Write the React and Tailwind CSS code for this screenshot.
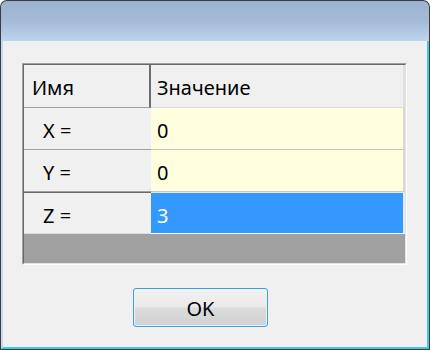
import React from "react";

const font = { fontFamily: '"Noto Sans", "Open Sans", sans-serif' };

function RowHeader({ label, current }) {
  return (
    <div
      className={
        current
          ? "w-[127px] h-[42px] flex items-center pl-[19px] pt-[5px] bg-[#f0f0f0] border-t border-t-[#6a6a6a] border-b border-b-[#dadada]"
          : "w-[127px] h-[42px] flex items-center pl-[19px] pt-[5px] bg-[#f0f0f0] border-b border-b-[#a0a0a0]"
      }
    >
      {label}
    </div>
  );
}

export default function App() {
  return (
    <div
      className="w-[430px] h-[350px] bg-[#3c3c3c] rounded-t-[7px] p-px flex flex-col text-[20px] text-black"
      style={font}
    >
      <div className="h-[40px] rounded-t-[6px] bg-gradient-to-b from-[#9bb3cf] via-[#a3bbd8] to-[#bed5ee]" />
      <div className="flex-1 flex flex-col bg-[#f0f0f0] border-l-2 border-l-[#c4d8ee] border-r-2 border-r-[#3cc6f2] border-b-2 border-b-[#3cc6f2]">
        <div className="ml-[19px] mt-[22px] w-[385px] h-[202px] border border-t-[#a0a0a0] border-l-[#a0a0a0] border-r-white border-b-white">
          <div className="w-full h-full flex flex-col border border-t-[#696969] border-l-[#696969] border-r-[#e3e3e3] border-b-[#e3e3e3]">
            <div className="flex h-[43px]">
              <div className="w-[127px] flex items-center pl-[8px] pt-[3px] bg-[#f0f0f0] border-r-2 border-r-[#6e6e6e] border-b border-b-[#a0a0a0]">
                Имя
              </div>
              <div className="flex-1 flex items-center pl-[6px] pt-[3px] bg-[#f0f0f0] border-b border-b-[#dcdcdc] border-r-2 border-r-[#e0e0e0]">
                Значение
              </div>
            </div>
            <div className="flex">
              <RowHeader label="X =" />
              <div className="flex-1 h-[42px] flex items-center pl-[6px] pt-[5px] bg-[#ffffe0] border-b border-b-[#c8c8c8] border-r-2 border-r-[#d8d8d8]">
                0
              </div>
            </div>
            <div className="flex">
              <RowHeader label="Y =" />
              <div className="flex-1 h-[42px] flex items-center pl-[6px] pt-[5px] bg-[#ffffe0] border-b border-b-[#c8c8c8] border-r-2 border-r-[#d8d8d8]">
                0
              </div>
            </div>
            <div className="flex">
              <RowHeader label="Z =" current />
              <div className="flex-1 h-[42px] flex items-center pl-[6px] pt-[5px] bg-[#3399ff] text-white border-t border-t-[#e8e8e8] border-b border-b-white border-r-2 border-r-[#e8e8e8]">
                3
              </div>
            </div>
            <div className="flex-1 bg-[#a0a0a0]" />
          </div>
        </div>
        <button className="ml-[130px] mt-[23px] w-[135px] h-[39px] rounded-[3px] border border-[#3c9fd9] bg-[linear-gradient(#f2f2f2,#eaeaea_48%,#dcdcdc_52%,#d0d0d0)] flex items-center justify-center pt-[2px] shadow-[inset_0_0_0_1px_#e8f4fc]">
          OK
        </button>
      </div>
    </div>
  );
}
